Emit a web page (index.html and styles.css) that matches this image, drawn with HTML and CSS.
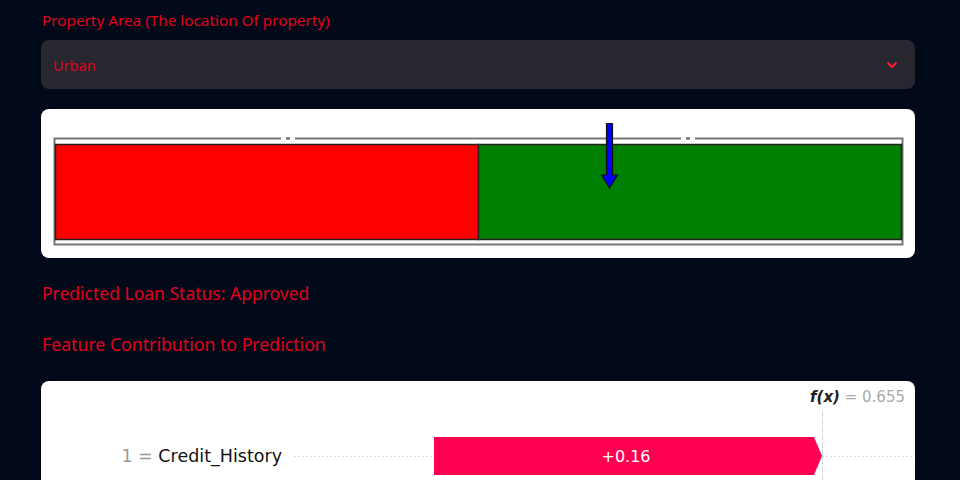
FILE: index.html
```html
<!DOCTYPE html>
<html>
<head>
<meta charset="utf-8">
<link rel="stylesheet" href="styles.css">
</head>
<body>
<div class="main">
  <div class="field-label">Property Area (The location Of property)</div>
  <div class="select">
    <span class="select-value">Urban</span>
    <svg class="chevron" width="12" height="8" viewBox="0 0 12 8"><path d="M1.5 1.5 L6 6 L10.5 1.5" fill="none" stroke="#ff1a2e" stroke-width="2"/></svg>
  </div>
  <div class="card gauge-card">
    <svg width="874" height="149" viewBox="0 0 874 149">
      <rect x="13.5" y="29.5" width="848" height="106" fill="none" stroke="#777" stroke-width="2"/>
      <rect x="240" y="27" width="14" height="5" fill="#fff"/>
      <rect x="245" y="28" width="4" height="3" fill="#888"/>
      <rect x="640" y="27" width="14" height="5" fill="#fff"/>
      <rect x="645" y="28" width="4" height="3" fill="#888"/>
      <rect x="14.5" y="35.5" width="423" height="95" fill="#ff0000" stroke="#222" stroke-width="1.5"/>
      <rect x="437.5" y="35.5" width="423" height="95" fill="#008000" stroke="#222" stroke-width="1.5"/>
      <path d="M565.5 14.5 H571.5 V66 H576.5 L568.5 79 L560.5 66 H565.5 Z" fill="#0000ff" stroke="#111" stroke-width="1.2"/>
    </svg>
  </div>
  <div class="result">Predicted Loan Status: Approved</div>
  <div class="section-title">Feature Contribution to Prediction</div>
  <div class="card shap-card">
    <div class="fx"><span class="fx-f">f(x)</span> <span class="fx-eq">= 0.655</span></div>
    <div class="shap-row">
      <div class="shap-label"><span class="val">1 =</span> Credit_History</div>
      <div class="shap-track">
        <div class="shap-bar">+0.16</div>
      </div>
    </div>
    <div class="vline"></div>
  </div>
</div>
</body>
</html>
```
FILE: styles.css
```css
html, body {
  margin: 0;
  padding: 0;
  background: #020a1a;
  overflow: hidden;
}
.main {
  width: 874px;
  margin-left: 41px;
  font-family: "Noto Sans", "Open Sans", sans-serif;
  color: #e0001c;
}
.field-label {
  font-size: 15.3px;
  line-height: 20px;
  padding-top: 10px;
  padding-left: 1px;
  height: 30px;
  box-sizing: border-box;
}
.select {
  margin-top: 10px;
  height: 49px;
  background: #27272f;
  border-radius: 8px;
  display: flex;
  align-items: center;
  justify-content: space-between;
  padding: 0 17px 0 12px;
  box-sizing: border-box;
}
.select-value {
  font-size: 14.5px;
  color: #e0001c;
  padding-top: 1px;
}
.chevron {
  display: block;
  margin-top: 1px;
}
.card {
  background: #fff;
  border-radius: 8px;
}
.gauge-card {
  margin-top: 20px;
  height: 149px;
  overflow: hidden;
}
.gauge-card svg {
  display: block;
}
.result {
  font-size: 17.5px;
  line-height: 24px;
  margin-top: 23px;
  padding-left: 1px;
}
.section-title {
  font-size: 17.7px;
  line-height: 24px;
  margin-top: 27px;
  padding-left: 1px;
}
.shap-card {
  margin-top: 25px;
  height: 99px;
  border-radius: 8px 8px 0 0;
  overflow: hidden;
  position: relative;
  font-family: "DejaVu Sans", sans-serif;
}
.fx {
  text-align: right;
  padding: 6px 10px 0 0;
  font-size: 15px;
  line-height: 20px;
  color: #aaa;
}
.fx-f {
  color: #222;
  font-style: italic;
  font-weight: bold;
}
.shap-row {
  display: flex;
  align-items: center;
  margin-top: 30px;
  height: 38px;
}
.shap-label {
  width: 241px;
  text-align: right;
  font-size: 17.5px;
  color: #111;
  flex: none;
}
.shap-label .val {
  color: #999;
}
.shap-track {
  flex: 1;
  height: 38px;
  background: linear-gradient(to right, #ddd 50%, transparent 50%) repeat-x left center / 4px 1px;
  margin-left: 12px;
  display: flex;
  align-items: center;
}
.shap-bar {
  margin-left: 140px;
  width: 388px;
  height: 38px;
  background: #ff0051;
  color: #fff;
  font-size: 16px;
  display: flex;
  align-items: center;
  justify-content: center;
  clip-path: polygon(0 0, 380px 0, 388px 50%, 380px 100%, 0 100%);
  padding-right: 4px;
  box-sizing: border-box;
}
.vline {
  position: absolute;
  left: 781px;
  top: 30px;
  bottom: 0;
  width: 0;
  border-left: 1px dotted #bbb;
}
```
